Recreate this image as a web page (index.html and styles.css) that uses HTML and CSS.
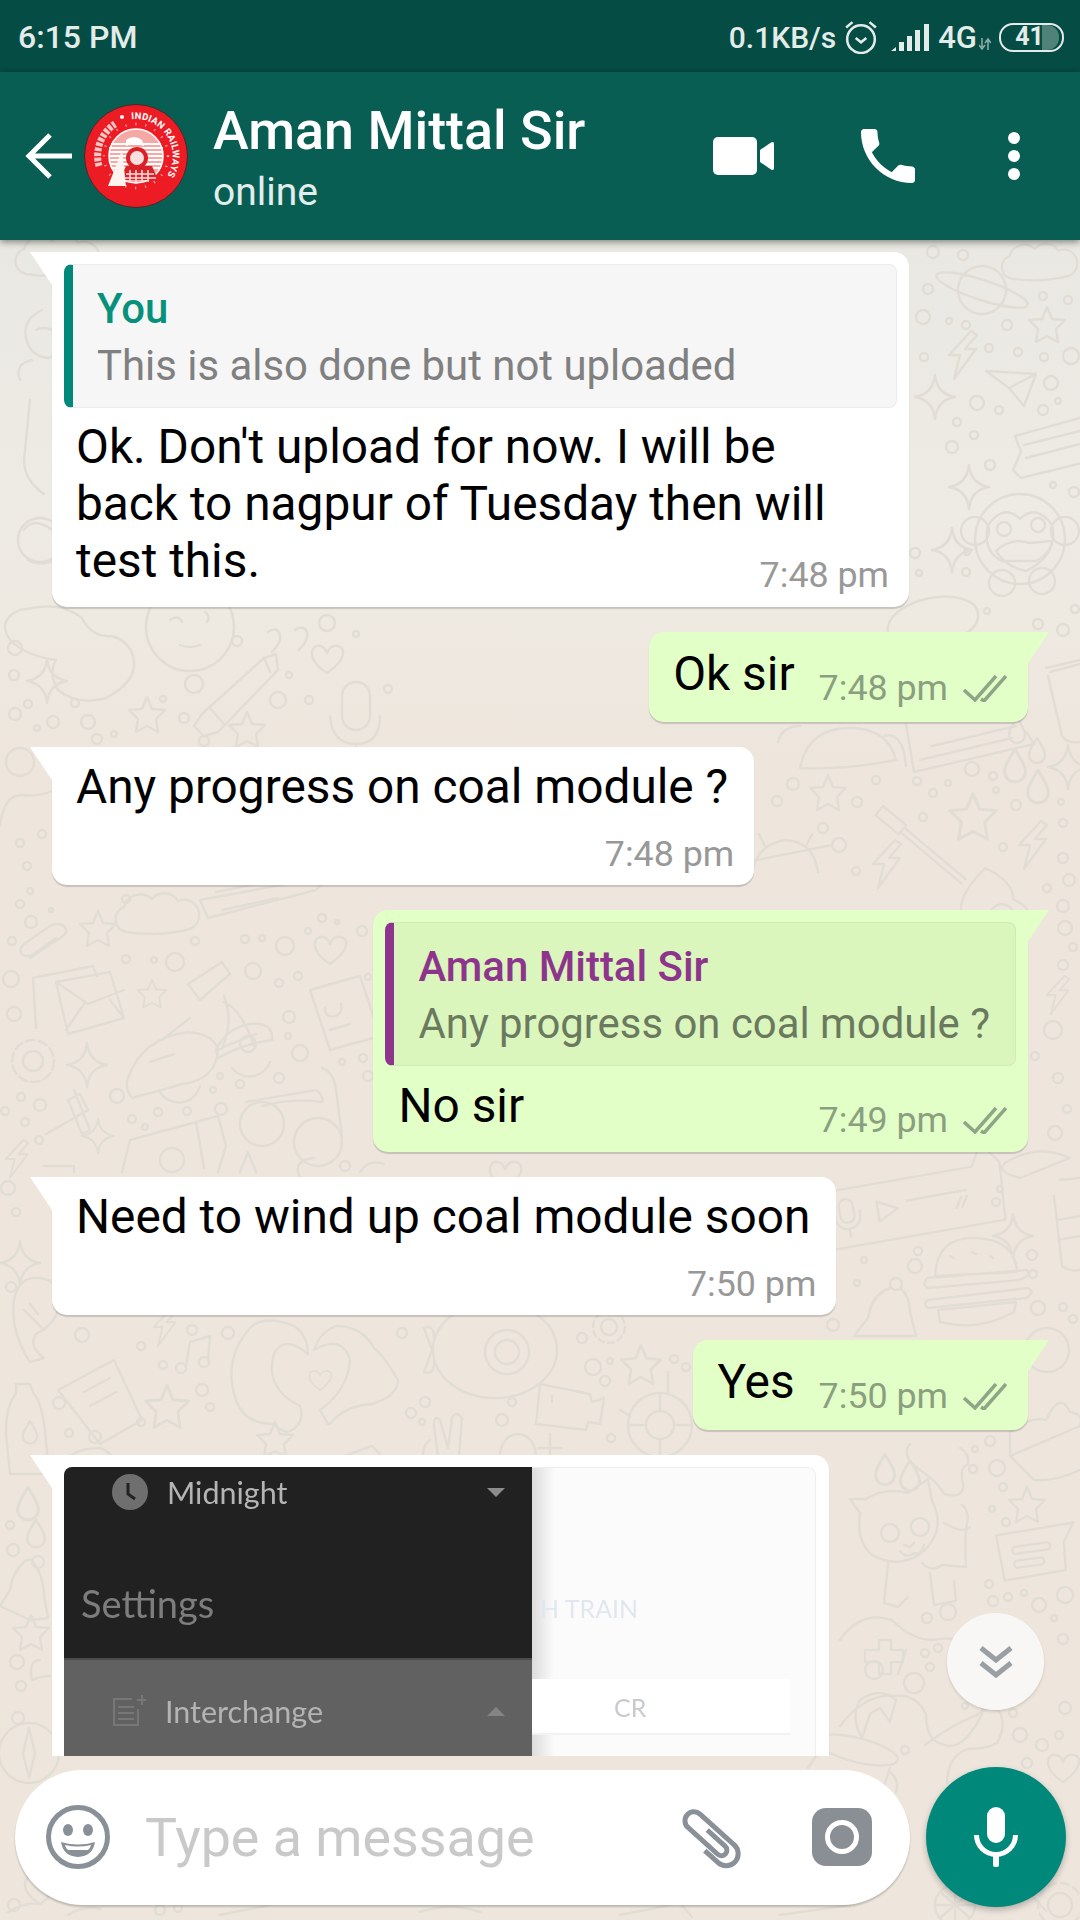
FILE: index.html
```html
<!DOCTYPE html>
<html lang="en">
<head>
    <meta charset="UTF-8">
    <meta name="viewport" content="width=device-width, initial-scale=1.0">
    <title>Aman Mittal Sir</title>
    <link rel="stylesheet" href="styles.css">
</head>
<body>
<div class="phone">
    <div class="status">
        <span>6:15 PM</span>
        <div class="status-right">
            <span class="speed">0.1KB/s</span>
            <svg class="alarm" viewBox="0 0 32 32"><circle cx="16" cy="18" r="13"/><path d="M11 17l5 4 5-4M2 7l6-5M30 7l-6-5"/></svg>
            <svg class="signal" viewBox="0 0 39 27"><path d="M0 27l5-4v4zM8 18h5v9H8zM16 12h5v15h-5zM24 6h5v21h-5zM33 0h5v27h-5z"/></svg>
            <span class="net">4G</span>
            <svg class="updown" viewBox="0 0 12 12"><path d="M3 0v9M0 7l3 4 3-4M9 12V3M6 5l3-4 3 4"/></svg>
            <div class="battery"><span class="battery-fill"></span><span class="battery-num">41</span></div>
        </div>
    </div>

    <header class="appbar">
        <svg class="back" viewBox="0 0 47 46"><path d="M47 23H5M25 2L4 23l21 21"/></svg>
        <svg class="avatar" viewBox="0 0 104 104">
            <defs>
                <path id="ringRight" d="M47.500 15.300A37 37 0 0 1 84 70"/>
            </defs>
            <circle cx="52" cy="52" r="51.500" fill="#ed1c24" stroke="#3a2d2c" stroke-width="1"/>
            <text class="avatar-text"><textPath href="#ringRight">INDIAN RAILWAYS</textPath></text>
            <path d="M15 62A38 38 0 0 1 31 20" fill="none" stroke="#f7c9c4" stroke-width="7" stroke-dasharray="3.500 1.500"/>
            <circle cx="38" cy="13" r="2" fill="#fff"/>
            <circle cx="52" cy="52" r="32" fill="none" stroke="#fbb" stroke-width="2.400" stroke-dasharray="1 9"/>
            <circle cx="52" cy="52" r="27" fill="#f6a9a4" stroke="#fff" stroke-width="1.500"/>
            <path d="M27 40h50M25 44h54M25 48h54M25 52h54M25 56h54M26 60h52M27 64h50" stroke="#fff" stroke-width="1.800"/>
            <path d="M42 62h26l6 14H36z" fill="#d92128"/>
            <path d="M42 70h28M40 74h32M46 66v12M52 66v12M58 66v12M64 66v12" stroke="#fbdedb" stroke-width="1.500"/>
            <circle cx="53" cy="54" r="11" fill="#d92128"/>
            <circle cx="53" cy="54" r="7" fill="#f9dfdd"/>
            <path d="M24 82l8-20 6-16 4 36z" fill="#fff3f0"/>
            <path d="M42 36q8-6 16 0l2 6q-10-4-18 0z" fill="#fff"/>
        </svg>
        <div class="who">
            <div class="who-name">Aman Mittal Sir</div>
            <div class="who-state">online</div>
        </div>
        <div class="actions">
            <svg class="act-video" viewBox="0 0 61 38"><rect width="44" height="38" rx="5"/><path d="M47 13l11-7.500q3-1.500 3 1.500v24q0 3-3 1.500L47 25z"/></svg>
            <svg class="act-call" viewBox="3 3 18 18"><path d="M6.620 10.790c1.440 2.830 3.760 5.140 6.590 6.590l2.200-2.200c.27-.27.67-.36 1.020-.24 1.120.37 2.330.57 3.570.57.55 0 1 .45 1 1V20c0 .55-.45 1-1 1-9.390 0-17-7.610-17-17 0-.55.45-1 1-1h3.500c.55 0 1 .45 1 1 0 1.250.2 2.450.57 3.570.11.35.03.74-.25 1.020l-2.200 2.200z"/></svg>
            <svg class="act-more" viewBox="0 0 12 48"><circle cx="6" cy="6" r="6"/><circle cx="6" cy="24" r="6"/><circle cx="6" cy="42" r="6"/></svg>
        </div>
    </header>

    <main class="chat">
        <!-- wallpaper doodles, page coordinates shifted by the header -->
        <svg class="wallpaper" viewBox="0 240 1080 1680">
            <defs>
                <path id="star" d="M0-18L5-6l13 1-9 9 2 13-11-6-11 6 2-13-9-9 13-1z"/>
                <path id="spark" d="M0-22Q2-3 20 0 2 3 0 22-2 3-20 0-2-3 0-22z"/>
                <path id="drop" d="M0-12C6-3 8 1 8 5A8 8 0 0 1-8 5C-8 1-6-3 0-12z"/>
                <path id="bolt" d="M8-24L-14 0H-3L-9 24 13-6H2L14-20z"/>
                <path id="heart" d="M0 14C-22 0-16-15-7-13-3-12-1-9 0-6 2-11 6-14 11-13 20-11 18 2 0 14z"/>
                <path id="cloud" d="M-34 14a13 13 0 0 1-2-25 17 17 0 0 1 28-8 16 16 0 0 1 26 2 15 15 0 0 1 12 28q-30 8-64 3z"/>
            </defs>
            <use href="#star" transform="translate(1047 325)"/><use href="#star" transform="translate(828 793)"/>
            <use href="#star" transform="translate(973 817) scale(1.3)"/>
            <use href="#star" transform="translate(147 715)"/><use href="#star" transform="translate(247 730)"/>
            <use href="#star" transform="translate(98 929)"/><use href="#star" transform="translate(152 994) scale(.8)"/>
            <use href="#star" transform="translate(167 1407) scale(1.2)"/><use href="#star" transform="translate(275 1440)"/>
            <use href="#star" transform="translate(641 1365) scale(1.1)"/><use href="#star" transform="translate(1027 1505)"/>
            <use href="#star" transform="translate(31 1633)"/>
            <use href="#spark" transform="translate(935 397)"/><use href="#spark" transform="translate(969 487)"/>
            <use href="#spark" transform="translate(952 550)"/><use href="#spark" transform="translate(1068 767)"/>
            <use href="#spark" transform="translate(47 681)"/><use href="#spark" transform="translate(87 1065)"/>
            <use href="#spark" transform="translate(98 1136) scale(.8)"/><use href="#spark" transform="translate(1013 1236)"/>
            <use href="#spark" transform="translate(20 1263)"/>
            <use href="#drop" transform="translate(1015 765) scale(1.3)"/><use href="#drop" transform="translate(1038 786) scale(1.3)"/>
            <use href="#drop" transform="translate(1037 750)"/><use href="#drop" transform="translate(1017 730)"/>
            <use href="#drop" transform="translate(885 1469) scale(1.2)"/><use href="#drop" transform="translate(910 1475) scale(1.2)"/>
            <use href="#drop" transform="translate(28 1503) scale(1.3)"/><use href="#drop" transform="translate(36 1533) scale(1.1)"/>
            <use href="#bolt" transform="translate(963 355)"/><use href="#bolt" transform="translate(1033 845)"/>
            <use href="#bolt" transform="translate(887 864)"/><use href="#bolt" transform="translate(1058 995) scale(.8)"/>
            <use href="#bolt" transform="translate(165 1327) scale(.8)"/><use href="#bolt" transform="translate(17 1159) scale(.8)"/>
            <use href="#heart" transform="translate(327 659)"/><use href="#heart" transform="translate(330 950)"/>
            <use href="#heart" transform="translate(320 1380) scale(.7)"/><use href="#heart" transform="translate(1063 1768)"/>
            <use href="#heart" transform="translate(505 1175)"/><use href="#heart" transform="translate(40 1890)"/>
            <use href="#cloud" transform="translate(1042 266) scale(.9)"/><use href="#cloud" transform="translate(160 918)"/>
            <use href="#cloud" transform="translate(60 260)"/>

            <!-- planet -->
            <g transform="translate(982 290) rotate(18)"><circle r="24"/><ellipse rx="48" ry="10"/></g>
            <!-- paper plane -->
            <path d="M986 371l50 3-12 32-15-18-23-17zM1009 388l27-14"/>
            <!-- ticket -->
            <path d="M1080 418l-65 18 6 16-8 18 8 8 65-16M1024 445l56-14M1026 458l54-14"/>
            <!-- monkey -->
            <g transform="translate(1020 539)">
                <circle r="45"/><circle cx="-45" cy="-8" r="14"/><circle cx="45" cy="-8" r="14"/>
                <path d="M-32-14q16-22 32-6 16-16 32 6 6 24-16 36H-18Q-38 12-32-14z"/>
                <circle cx="-16" cy="-10" r="7"/><circle cx="18" cy="-14" r="7"/>
                <path d="M-24 12q14-14 34-8l22-2q-2 18-26 30-20-4-30-20z"/>
                <circle cx="-18" cy="44" r="13"/><circle cx="22" cy="42" r="13"/>
            </g>
            <!-- donut and cup -->
            <ellipse cx="933" cy="622" rx="46" ry="24" transform="rotate(-12 933 622)"/>
            <path d="M1046 668l34-8M1048 676l14 60q6 8 18 6M1050 672l30-8"/>
            <!-- notebook -->
            <path d="M908 700l8 48 120-28-8-12M922 736l92-22M934 722l84-20" transform="translate(-2 24)"/>
            <!-- taco -->
            <path d="M800 768q8-40 50-40 38 0 46 32q-50 10-96 8zM778 742q4-16 22-16M884 736q14-4 20 16l2 14"/>
            <!-- guitar -->
            <g transform="translate(887 817) rotate(40)">
                <path d="M-10-6l30 0 0 12-30 0zM20-3H100M20 3H100M108-24q30-8 42 6 24-8 32 16 0 20-24 22-14 8-36 8-18-10-14-52z"/>
                <circle cx="152" cy="2" r="12"/>
            </g>
            <!-- android and folder -->
            <path d="M752 874q4-30 34-34 28 2 32 32M765 846l-6-12M806 846l6-12"/>
            <path d="M740 885l12-24 80-16"/>

            <!-- mic card and burger -->
            <g transform="translate(910 1208) rotate(-10)">
                <path d="M-92-30L68-30 80-52 96-30 92 28-92 28z"/>
                <rect x="-70" y="-20" width="14" height="24" rx="7"/><path d="M-76-6q1 16 13 16 13 0 13-16M-63 10v8"/>
                <path d="M-32-12l20 10-20 10zM-2-8h60M46 8l6-10M52 8l6-10"/>
            </g>
            <path d="M935 1276q2-40 42-38 38 2 40 34zM927 1278l100-8q4 6-8 10l-90 8q-8-2-2-10zM928 1300l100-12q8 4-2 10l-98 10q-6-4 0-8zM938 1310l78-8-2 10q-36 20-74 10z"/>
            <path d="M950 1256l4 2M972 1252l4 2M990 1256l3 2"/>
            <!-- bell -->
            <circle cx="896" cy="1284" r="6"/><path d="M890 1288q-18 6-22 30l-14 18 62 0-6-24q0-16-10-24"/>
            <!-- tall cup and wave -->
            <path d="M1060 1180l20-2M1054 1196l8 70q8 6 18 4M1058 1220l22-4M1058 1240l22-4M1010 1160q30-16 60-2l-50 20q-30-8-10-18z"/>
            <!-- wheel and cupcake -->
            <circle cx="1047" cy="1350" r="22"/><path d="M1010 1432q20-16 36-12 14-30 24-8 14 2 10 14l-70 30zM1010 1456l24 24q20 2 46-10"/>
            <!-- blob and popsicle -->
            <path d="M910 1444q-10 12 10 26 18 12 24 24 24 6 18-16-2-10 6-14 2-10-8-16"/>

            <!-- cat -->
            <g transform="translate(912 1543)">
                <path d="M-52-30l-10-14 16 0q18-12 42-6l20-14 4 22q14 26-6 48-24 22-54 6Q-56-2-52-30z"/>
                <path d="M32-20l8 4q12 6 18 0M10 20q10 10 20 2l24 2q-2-30 2-50-2-10-6-12M-24 20l-4 40 14 4 10-10M18 30l4 32 22-4-2-20"/>
                <circle cx="-22" cy="-10" r="9"/><circle cx="8" cy="-16" r="9"/><path d="M-12 8q6 8 14 2 8 2 10-8M-8 2l6 2 4-4"/>
            </g>
            <!-- note card -->
            <g transform="translate(1029 1553) rotate(-8)">
                <path d="M-30-22L48-24 36-6 34 22-28 24z"/>
                <rect x="-16" y="-8" width="38" height="7" rx="3"/><rect x="-16" y="6" width="30" height="7" rx="3"/>
            </g>
            <!-- gamepad -->
            <path d="M840 1640q20-30 52-20 20 20 40 20 36-6 50 14 4 30 0 60-20 40-40 30-16-4-16-30-10-20-30-18-30-4-56 30M865 1650h14v-10h12v10h12v12h-12v12h-12v-12h-14zM906 1650l-8 24"/>
            <!-- shell -->
            <path d="M860 1700q20-14 36 0l-6 22-10-14-10 6-8 24q-12-20-2-38z"/>
            <!-- mug near composer -->
            <ellipse cx="857" cy="1750" rx="42" ry="12" transform="rotate(14 857 1750)"/>
            <path d="M820 1750l-12 18M890 1768l-10 30"/>
            <!-- hand and wheel under the mic -->
            <path d="M925 1745q26-20 52-30 12-10 22-4 8 14-2 32-10 6-30 6-20 8-20 34"/>
            <circle cx="955" cy="1905" r="20"/><path d="M955 1885v40M935 1905h40M940 1892l30 26M970 1892l-30 26"/>
            <circle cx="1060" cy="1905" r="12"/><circle cx="1060" cy="1905" r="22" stroke-dasharray="8 5"/>

            <!-- top left -->
            <path d="M10 640q-14-20 10-30l12-2q30-6 50 10 10 20 30 18 20 6 22 26t-28 36q-28 8-48-8-10-16-2-30-30-4-46-20z"/>
            <circle cx="190" cy="627" r="44"/><path d="M170 620q8-6 12 2M205 612q6 4 2 10M180 645q10 4 20 0"/>
            <path d="M268 632q8-6 12 2 2 8-8 18M295 630q8-6 12 2 2 8-8 18"/>
            <path d="M42 310q-20 10-16 28t22 20q10-2 12-14M36 330q8-4 16 0"/>
            <path d="M20 380q-6-16 12-20M30 400l-6 60q0 20 20 34"/>
            <circle cx="40" cy="540" r="22"/><path d="M24 530q10-14 28 0M28 560q14 8 30-2"/>
            <!-- pencil -->
            <path d="M264 658l-62 56-8 12 10 10 14-4 60-62-2-16zM210 708l14 16M264 658l6 14"/>
            <!-- mic -->
            <rect x="342" y="682" width="28" height="48" rx="14"/><path d="M330 716q2 28 26 28 24 0 24-28M356 744v14"/>
            <!-- person -->
            <circle cx="20" cy="762" r="14"/><path d="M0 825q4-30 22-30 16 2 30-4"/>
            <!-- card row -->
            <path d="M200 900l130-24-14 14-108 28-8-18zM216 892l60-12M222 910l56-12"/>
            <!-- paperclip -->
            <path d="M30 958l30-20q10-6 4-12-6-4-14 0l-26 18q-6 6-2 10 4 4 12 0l22-16"/>
            <!-- envelope -->
            <path d="M36 1028L33 978l60-12 4 10M56 982l54-10 14 46-56 16zM56 982l32 22 36-14M66 1030l18-26M110 1000l14 18"/>
            <!-- scooter -->
            <g>
                <path d="M128 1078q14-40 60-46 26 2 30 18-2 30-36 34-26 8-50 14-8-10-4-20zM190 1018l-28 22M150 1062l24-8"/>
                <path d="M160 1092a22 22 0 0 0 40-6M218 1050l8-4 30-12M222 1048q12-26 2-52M188 984l34-22 8 12-30 26-12-16zM224 1002q18 8 30 44M216 1050q10-22 34-26 24-2 22 16-30 4-54 18zM232 1068a22 22 0 0 0 38-6"/>
                <circle cx="248" cy="1044" r="8"/>
            </g>
            <!-- gear -->
            <circle cx="33" cy="1061" r="10"/><circle cx="33" cy="1061" r="21" stroke-dasharray="9 4"/>
            <!-- passport -->
            <path d="M310 990l50-14 20 60-50 14zM310 990l42-12M325 1008q0 10 10 8 8-2 6-12M330 1030l20-6"/>
            <!-- glasses -->
            <circle cx="262" cy="1124" r="22"/><circle cx="318" cy="1142" r="24"/><path d="M246 1102l70-12q8 6 6 12-30-4-60 4M322 1068q12 4 14 22l6 46"/>
            <!-- bluetooth-like bow -->
            <path d="M46 1134l42-24-8-16-12 6 14 34 8-4-16-40"/>
            <!-- lipstick and bottom bits -->
            <path d="M122 1172l8-32 88-24 8 30-8 26M196 1122l8 46"/><circle cx="172" cy="1160" r="12"/>
            <path d="M240 1172l8-20 8 20"/>
            <path d="M44 1166h30v6M360 1172q10-14 24-8M300 1178q-8-18 14-20"/>

            <!-- middle band -->
            <path d="M14 1300q4-24 26-22 20 2 20 26-4 20-24 30-8 12 8 24l-14 4q-20-30-16-62zM24 1310l20 20M30 1304l8 10"/>
            <path d="M58 1390l56-30 28 60-42 24-42-54zM84 1392l26-14M90 1406l26-14"/>
            <path d="M186 1366l4-24 20-6-2 24"/><circle cx="181" cy="1368" r="5"/><circle cx="204" cy="1362" r="5"/>
            <!-- heart hands -->
            <path d="M236 1400q-14-40 14-72 14-14 44-2 14 10 14 28-24-20-34 0-10 34 26 52 6 18-12 26-10-2-14-8-30 0-38-24zM330 1424q14-18 42-20 26-8 26-24-14-24-24-32-12-22-38-22-16 6-22 24 28-16 36 10-2 30-30 50l8 14z"/>
            <!-- balloon eye -->
            <ellipse cx="495" cy="1350" rx="62" ry="48"/><circle cx="507" cy="1352" r="22"/><circle cx="507" cy="1352" r="12"/>
            <path d="M432 1350l-8-22q10-4 10 10M432 1350l-8 22q10 4 10-10"/>
            <!-- peace hand -->
            <path d="M440 1472l-6-46q0-12 6-6l8 28 4-30q4-8 10 0l-4 50M430 1440q-10 6-6 30"/>
            <ellipse cx="518" cy="1456" rx="18" ry="22"/><path d="M550 1434v30M538 1448h24"/>
            <!-- wallet -->
            <path d="M300 1472l72-26 26 26M330 1458l-10 14"/>
            <!-- video card -->
            <path d="M540 1384l50 10 2 8 12-4-4 26-12-2-2 8-50-6zM552 1396v6"/>
            <!-- gear small -->
            <circle cx="609" cy="1327" r="8"/><circle cx="609" cy="1327" r="16" stroke-dasharray="6 4"/>
            <!-- turtle -->
            <circle cx="660" cy="1425" r="32"/><circle cx="660" cy="1425" r="14"/><path d="M660 1393v18M660 1440v16M630 1425h16M674 1425h16M620 1410l10 6M668 1372v20"/>
            <!-- bottle -->
            <path d="M16 1384h14l4 10q10 12 12 50l4 30H10l-4-40q0-30 10-40z"/><use href="#drop" transform="translate(30 1432) scale(.9)"/>
            <path d="M60 1472q6-24 40-24 14 4 18 24M160 1465l40-8 14 16"/>
            <!-- bell and compass left -->
            <path d="M26 1560q-14 12-16 30L0 1606l30 14 18-2-4-22q0-20-12-36z"/><circle cx="38" cy="1562" r="6"/>
            <circle cx="29" cy="1753" r="30"/><path d="M29 1728l6 25-6 25-6-25z"/><path d="M40 1660q-12 0-8 20 8-4 18-4"/><circle cx="18" cy="1718" r="6"/>

            <!-- below the composer -->
            <path d="M8 1912q16-10 32-8M68 1915q16-10 32-6M220 1915l50-10M420 1912q30-10 60 0M620 1915l60-12 12 14M780 1915l70-10"/>
            <path d="M1022 1885l24 26M1040 1860q10-6 16 4l-8 12M890 1772q10 8 6 20"/>

            <!-- small rings, right strip -->
            <g>
                <circle cx="923" cy="317" r="7"/><circle cx="928" cy="289" r="5"/><circle cx="933" cy="252" r="6"/><circle cx="963" cy="255" r="5"/><circle cx="949" cy="321" r="3"/><circle cx="966" cy="325" r="4"/><circle cx="1007" cy="325" r="5"/><circle cx="989" cy="348" r="4"/><circle cx="1018" cy="352" r="4"/><circle cx="1044" cy="357" r="4"/><circle cx="1071" cy="356" r="8"/><circle cx="924" cy="357" r="4"/><circle cx="1043" cy="296" r="4"/><circle cx="1068" cy="300" r="4"/><circle cx="1051" cy="383" r="7"/><circle cx="1058" cy="401" r="3"/><circle cx="977" cy="403" r="7"/><circle cx="999" cy="410" r="4"/><circle cx="1043" cy="410" r="5"/><circle cx="957" cy="422" r="4"/><circle cx="974" cy="435" r="4"/><circle cx="952" cy="447" r="6"/><circle cx="990" cy="465" r="5"/><circle cx="1053" cy="485" r="3"/><circle cx="1074" cy="492" r="5"/><circle cx="915" cy="553" r="5"/><circle cx="919" cy="573" r="3"/><circle cx="967" cy="552" r="3"/><circle cx="966" cy="572" r="4"/><circle cx="987" cy="611" r="3"/><circle cx="1038" cy="624" r="5"/><circle cx="1063" cy="630" r="6"/><circle cx="1075" cy="609" r="4"/>
                <circle cx="917" cy="781" r="4"/><circle cx="933" cy="793" r="4"/><circle cx="948" cy="783" r="3"/><circle cx="972" cy="769" r="7"/><circle cx="993" cy="776" r="4"/><circle cx="996" cy="790" r="3"/><circle cx="1016" cy="805" r="5"/><circle cx="1061" cy="802" r="3"/><circle cx="1063" cy="823" r="4"/><circle cx="1069" cy="880" r="6"/><circle cx="923" cy="817" r="4"/><circle cx="839" cy="845" r="7"/><circle cx="857" cy="802" r="5"/><circle cx="856" cy="871" r="4"/><circle cx="1003" cy="847" r="4"/><circle cx="1047" cy="888" r="4"/><circle cx="1063" cy="858" r="5"/><circle cx="1063" cy="906" r="6"/><circle cx="793" cy="784" r="6"/><circle cx="777" cy="801" r="5"/><circle cx="876" cy="780" r="4"/><circle cx="823" cy="828" r="5"/>
                <circle cx="1053" cy="1030" r="9"/><circle cx="1063" cy="965" r="5"/><circle cx="1065" cy="928" r="7"/><circle cx="1073" cy="947" r="4"/><circle cx="1035" cy="1056" r="4"/><circle cx="1058" cy="1078" r="5"/><circle cx="1067" cy="1109" r="4"/><circle cx="1055" cy="1133" r="7"/><circle cx="1000" cy="1189" r="3"/><circle cx="996" cy="1202" r="4"/><circle cx="857" cy="1283" r="3"/><circle cx="864" cy="1260" r="3"/><circle cx="915" cy="1266" r="7"/><circle cx="918" cy="1251" r="4"/><circle cx="1032" cy="1255" r="5"/><circle cx="1033" cy="1274" r="4"/><circle cx="1038" cy="1308" r="7"/><circle cx="1063" cy="1307" r="4"/><circle cx="1073" cy="1319" r="4"/><circle cx="833" cy="1325" r="6"/><circle cx="990" cy="1441" r="5"/><circle cx="975" cy="1449" r="3"/><circle cx="973" cy="1469" r="4"/><circle cx="997" cy="1468" r="8"/><circle cx="1003" cy="1487" r="4"/><circle cx="992" cy="1509" r="3"/><circle cx="1006" cy="1522" r="4"/>
                <circle cx="989" cy="1584" r="4"/><circle cx="993" cy="1601" r="5"/><circle cx="1008" cy="1597" r="4"/><circle cx="1024" cy="1593" r="3"/><circle cx="1039" cy="1605" r="7"/><circle cx="1065" cy="1595" r="8"/><circle cx="1054" cy="1618" r="3"/><circle cx="1063" cy="1639" r="5"/><circle cx="1065" cy="1708" r="6"/><circle cx="1020" cy="1735" r="7"/><circle cx="1042" cy="1745" r="6"/><circle cx="1059" cy="1735" r="4"/><circle cx="1027" cy="1763" r="5"/><circle cx="1013" cy="1713" r="4"/><circle cx="965" cy="1706" r="3"/><circle cx="948" cy="1612" r="8"/><circle cx="927" cy="1618" r="5"/><circle cx="874" cy="1670" r="9"/><circle cx="914" cy="1683" r="10"/><circle cx="925" cy="1653" r="4"/><circle cx="938" cy="1648" r="4"/><circle cx="930" cy="1667" r="4"/><circle cx="905" cy="1750" r="4"/>
            </g>
            <!-- small rings, left side -->
            <g>
                <circle cx="15" cy="648" r="7"/><circle cx="14" cy="675" r="5"/><circle cx="15" cy="714" r="6"/><circle cx="28" cy="704" r="4"/><circle cx="37" cy="728" r="3"/><circle cx="53" cy="722" r="6"/><circle cx="75" cy="703" r="4"/><circle cx="88" cy="722" r="7"/><circle cx="97" cy="739" r="5"/><circle cx="114" cy="734" r="3"/><circle cx="194" cy="684" r="9"/><circle cx="163" cy="699" r="3"/><circle cx="184" cy="718" r="5"/><circle cx="204" cy="741" r="5"/><circle cx="278" cy="700" r="8"/><circle cx="289" cy="675" r="3"/><circle cx="309" cy="700" r="4"/><circle cx="327" cy="623" r="8"/><circle cx="237" cy="641" r="5"/><circle cx="356" cy="634" r="3"/><circle cx="388" cy="689" r="4"/>
                <circle cx="20" cy="843" r="4"/><circle cx="42" cy="834" r="4"/><circle cx="27" cy="866" r="4"/><circle cx="30" cy="891" r="3"/><circle cx="20" cy="904" r="4"/><circle cx="31" cy="922" r="6"/><circle cx="51" cy="910" r="2"/><circle cx="12" cy="941" r="4"/>
                <circle cx="126" cy="899" r="4"/><circle cx="195" cy="941" r="4"/><circle cx="126" cy="959" r="4"/><circle cx="154" cy="960" r="3"/><circle cx="175" cy="962" r="9"/><circle cx="245" cy="939" r="4"/><circle cx="262" cy="938" r="3"/><circle cx="285" cy="946" r="9"/><circle cx="322" cy="918" r="4"/><circle cx="337" cy="922" r="2"/><circle cx="362" cy="931" r="5"/><circle cx="308" cy="931" r="3"/><circle cx="253" cy="971" r="8"/><circle cx="279" cy="983" r="4"/><circle cx="298" cy="976" r="4"/><circle cx="11" cy="979" r="8"/><circle cx="368" cy="977" r="3"/><circle cx="14" cy="1014" r="7"/><circle cx="289" cy="1017" r="6"/><circle cx="288" cy="1036" r="3"/><circle cx="300" cy="1053" r="8"/><circle cx="363" cy="1058" r="4"/><circle cx="342" cy="1062" r="3"/><circle cx="368" cy="1076" r="5"/><circle cx="279" cy="1078" r="5"/><circle cx="220" cy="1076" r="3"/><circle cx="240" cy="1084" r="4"/><circle cx="213" cy="1090" r="3"/><circle cx="117" cy="1096" r="7"/><circle cx="21" cy="1097" r="4"/><circle cx="40" cy="1105" r="6"/><circle cx="5" cy="1111" r="4"/><circle cx="25" cy="1122" r="4"/><circle cx="39" cy="1140" r="4"/><circle cx="132" cy="1119" r="4"/><circle cx="145" cy="1127" r="3"/><circle cx="158" cy="1112" r="4"/><circle cx="187" cy="1111" r="4"/><circle cx="221" cy="1109" r="6"/><circle cx="345" cy="1166" r="5"/><circle cx="8" cy="1188" r="7"/><circle cx="16" cy="1212" r="4"/><circle cx="11" cy="1287" r="5"/>
                <circle cx="82" cy="1335" r="7"/><circle cx="141" cy="1346" r="4"/><circle cx="163" cy="1365" r="4"/><circle cx="192" cy="1330" r="5"/><circle cx="228" cy="1333" r="6"/><circle cx="59" cy="1403" r="6"/><circle cx="202" cy="1390" r="6"/><circle cx="210" cy="1407" r="4"/><circle cx="141" cy="1422" r="4"/><circle cx="69" cy="1433" r="4"/><circle cx="95" cy="1437" r="6"/><circle cx="402" cy="1333" r="5"/><circle cx="582" cy="1338" r="5"/><circle cx="593" cy="1367" r="8"/><circle cx="610" cy="1361" r="3"/><circle cx="605" cy="1381" r="5"/><circle cx="411" cy="1413" r="5"/><circle cx="425" cy="1402" r="5"/><circle cx="422" cy="1422" r="3"/><circle cx="512" cy="1402" r="4"/><circle cx="502" cy="1420" r="6"/><circle cx="611" cy="1438" r="4"/><circle cx="674" cy="1359" r="4"/><circle cx="686" cy="1367" r="4"/>
                <circle cx="10" cy="1525" r="4"/><circle cx="13" cy="1550" r="6"/><circle cx="17" cy="1662" r="7"/><circle cx="21" cy="1686" r="5"/><circle cx="14" cy="1905" r="6"/><circle cx="160" cy="1910" r="5"/><circle cx="178" cy="1908" r="4"/>
            </g>
        </svg>

        <div class="messages">
            <article class="msg in msg-wide">
                <div class="quote quote-in">
                    <div class="quote-name">You</div>
                    <div class="quote-text">This is also done but not uploaded</div>
                </div>
                <div class="body">
                    <p class="text">Ok. Don't upload for now. I will be<br>back to nagpur of Tuesday then will</p>
                    <div class="row">
                        <p class="text text-row">test this.</p>
                        <div class="meta meta-in"><span>7:48 pm</span></div>
                    </div>
                </div>
            </article>

            <article class="msg out msg-short">
                <div class="row">
                    <p class="text text-row">Ok sir</p>
                    <div class="meta"><span>7:48 pm</span><svg class="ticks" viewBox="0 0 44 27"><path d="M1 15l11 10L33 1M18 24l3 2L43 1"/></svg></div>
                </div>
            </article>

            <article class="msg in">
                <div class="body">
                    <p class="text">Any progress on coal module ?</p>
                    <div class="meta meta-below"><span>7:48 pm</span></div>
                </div>
            </article>

            <article class="msg out">
                <div class="quote quote-out">
                    <div class="quote-name">Aman Mittal Sir</div>
                    <div class="quote-text">Any progress on coal module ?</div>
                </div>
                <div class="row row-reply">
                    <p class="text text-row">No sir</p>
                    <div class="meta"><span>7:49 pm</span><svg class="ticks" viewBox="0 0 44 27"><path d="M1 15l11 10L33 1M18 24l3 2L43 1"/></svg></div>
                </div>
            </article>

            <article class="msg in">
                <div class="body">
                    <p class="text">Need to wind up coal module soon</p>
                    <div class="meta meta-below"><span>7:50 pm</span></div>
                </div>
            </article>

            <article class="msg out msg-short">
                <div class="row">
                    <p class="text text-row">Yes</p>
                    <div class="meta"><span>7:50 pm</span><svg class="ticks" viewBox="0 0 44 27"><path d="M1 15l11 10L33 1M18 24l3 2L43 1"/></svg></div>
                </div>
            </article>

            <article class="msg in msg-shot">
                <div class="shot">
                    <div class="shot-side">
                        <div class="side-dark">
                            <div class="side-item">
                                <svg class="side-clock" viewBox="0 0 36 36"><circle cx="18" cy="18" r="18" fill="#6f6f6f"/><path d="M16 9v11l7 5" fill="none" stroke="#222" stroke-width="3"/></svg>
                                <span>Midnight</span>
                                <i class="caret"></i>
                            </div>
                            <div class="side-title">Settings</div>
                        </div>
                        <div class="side-gray">
                            <div class="side-item">
                                <svg class="side-doc" viewBox="0 0 34 32"><path d="M20 4H2v26h24V14M6 12h16M6 18h16M6 24h16M30 0v10M25 5h9" fill="none" stroke="#777" stroke-width="2"/></svg>
                                <span>Interchange</span>
                                <i class="caret caret-up"></i>
                            </div>
                        </div>
                    </div>
                    <div class="shot-main">
                        <div class="shot-head">H TRAIN</div>
                        <div class="shot-table">CR</div>
                    </div>
                </div>
            </article>
        </div>

        <button class="scroll-down">
            <svg viewBox="0 0 34 32"><path d="M2 2l15 12L32 2M2 17l15 12 15-12"/></svg>
        </button>

        <div class="composer">
            <div class="input">
                <svg class="emoji" viewBox="0 0 64 64">
                    <circle cx="32" cy="32" r="29.500" fill="none" stroke="#8a9098" stroke-width="5"/>
                    <ellipse cx="22" cy="25" rx="5" ry="6" fill="#8a9098"/><ellipse cx="42" cy="25" rx="5" ry="6" fill="#8a9098"/>
                    <path d="M15 37q17 5 34 0-2 14-17 15-15-1-17-15z" fill="#8a9098"/><path d="M19 40q13 3 26 0-1 4-3 5H22q-2-1-3-5z" fill="#fff"/>
                </svg>
                <span class="placeholder">Type a message</span>
                <svg class="clip" viewBox="0 0 61 56"><path transform="translate(30 28) rotate(42)" d="M-6-4H18A5.500 5.500 0 0 1 18 7H-22A9 9 0 0 1-22-11H24A12 12 0 0 1 24 13H6"/></svg>
                <svg class="camera" viewBox="0 0 60 58"><rect width="60" height="58" rx="14" fill="#8a8f96"/><circle cx="30" cy="29" r="14.500" fill="none" stroke="#fff" stroke-width="5"/></svg>
            </div>
            <div class="mic">
                <svg viewBox="0 0 44 60"><rect x="13" width="18" height="36" rx="9" fill="#fff"/><path d="M2.500 28a19.500 19.500 0 0 0 39 0" fill="none" stroke="#fff" stroke-width="5"/><rect x="19" y="46" width="6" height="14" rx="2" fill="#fff"/></svg>
            </div>
        </div>
    </main>
</div>
</body>
</html>
```

FILE: styles.css
```css
* {
    box-sizing: border-box;
}

body {
    margin: 0;
    font-family: Roboto, "Liberation Sans", sans-serif;
    background-color: #efe7de;
}

.phone {
    width: 1080px;
    height: 1920px;
    display: flex;
    flex-direction: column;
    overflow: hidden;
}

/* status bar */
.status {
    height: 72px;
    flex-shrink: 0;
    padding: 2px 16px 0 18px;
    display: flex;
    align-items: center;
    justify-content: space-between;
    background-color: #054c44;
    color: #e4ecea;
    font-size: 32px;
    font-weight: 500;
}

.status-right {
    display: flex;
    align-items: center;
}

.speed {
    font-size: 30px;
}

.alarm {
    width: 34px;
    height: 34px;
    margin-left: 8px;
    fill: none;
    stroke: #e4ecea;
    stroke-width: 2.400;
}

.signal {
    width: 39px;
    height: 27px;
    margin-left: 13px;
    fill: #e4ecea;
}

.net {
    margin-left: 8px;
    font-size: 31px;
}

.updown {
    width: 12px;
    height: 12px;
    margin: 14px 0 0 2px;
    fill: none;
    stroke: #8fb0aa;
    stroke-width: 1.500;
}

.battery {
    position: relative;
    width: 65px;
    height: 29px;
    margin-left: 8px;
    border: 2.500px solid #e4ecea;
    border-radius: 14px;
    overflow: hidden;
    text-align: center;
}

.battery-fill {
    position: absolute;
    top: 0;
    bottom: 0;
    left: 41px;
    right: 3px;
    border-radius: 0 12px 12px 0;
    background-color: #4f8279;
}

.battery-num {
    position: relative;
    display: block;
    margin-left: -4px;
    font-size: 25px;
    line-height: 24px;
    font-weight: 700;
}

/* app bar */
.appbar {
    position: relative;
    z-index: 2;
    height: 168px;
    flex-shrink: 0;
    display: flex;
    align-items: center;
    background-color: #095e54;
    color: #fff;
    box-shadow: 0 2px 7px rgba(0, 0, 0, 0.45);
}

.back {
    width: 47px;
    height: 46px;
    margin-left: 25px;
    fill: none;
    stroke: #fff;
    stroke-width: 5;
}

.avatar {
    width: 104px;
    height: 104px;
    margin-left: 12px;
}

.avatar-text {
    font-size: 9.500px;
    font-weight: 700;
    letter-spacing: 0.2px;
    fill: #fff;
}

.who {
    margin-left: 25px;
    padding-top: 4px;
}

.who-name {
    font-size: 53.800px;
    line-height: 60px;
    font-weight: 500;
}

.who-state {
    margin-top: 8px;
    font-size: 39px;
    line-height: 46px;
    color: #e2eeeb;
}

.actions {
    margin-left: auto;
    padding-right: 60px;
    display: flex;
    align-items: center;
    fill: #fff;
}

.act-video {
    width: 61px;
    height: 38px;
}

.act-call {
    width: 54px;
    height: 54px;
    margin-left: 87px;
}

.act-more {
    width: 12px;
    height: 48px;
    margin-left: 93px;
}

/* chat */
.chat {
    position: relative;
    flex: 1;
    min-height: 0;
    display: flex;
    flex-direction: column;
    background: linear-gradient(#e9e8e2 0, #eeebe4 280px, #eee6dd 520px);
}

.wallpaper {
    position: absolute;
    top: 0;
    left: 0;
    width: 1080px;
    height: 1680px;
    fill: none;
    stroke: #e1ddd5;
    stroke-width: 2.400;
    stroke-linecap: round;
    stroke-linejoin: round;
}

.messages {
    position: relative;
    flex: 1;
    min-height: 0;
    padding-top: 12px;
    display: flex;
    flex-direction: column;
    gap: 25px;
    overflow: hidden;
}

.msg {
    position: relative;
    flex-shrink: 0;
    padding: 12px 12px 11px;
    border-radius: 15px;
    box-shadow: 0 2px 1px rgba(0, 0, 0, 0.16);
}

.msg::before {
    content: "";
    position: absolute;
    top: 0;
    width: 22px;
    height: 33px;
}

.in {
    align-self: flex-start;
    margin-left: 52px;
    background-color: #fff;
    border-top-left-radius: 0;
}

.in::before {
    left: -22px;
    background-color: #fff;
    clip-path: polygon(0 0, 100% 0, 100% 100%);
}

.out {
    align-self: flex-end;
    margin-right: 52px;
    background-color: #e2ffc7;
    border-top-right-radius: 0;
}

.out::before {
    right: -21px;
    background-color: #e2ffc7;
    clip-path: polygon(0 0, 100% 0, 0 100%);
}

.msg-wide {
    width: 857px;
    padding-bottom: 12px;
}

.msg-short {
    padding: 14px 21px 14px 24px;
}

.text {
    margin: 0;
    font-size: 47.800px;
    line-height: 57px;
    color: #000;
}

.body {
    padding: 0 14px 0 12px;
}

.quote + .body {
    margin-top: 11px;
}

.row {
    display: flex;
    align-items: flex-end;
    justify-content: space-between;
}

.row-reply {
    margin: 12px 0 1px;
    padding: 0 9px 0 13px;
}

.text-row {
    margin-bottom: 5px;
}

.meta {
    flex-shrink: 0;
    display: flex;
    align-items: center;
    justify-content: flex-end;
    height: 40px;
    font-size: 35.800px;
    line-height: 40px;
    color: #989898;
}

.meta-in {
    margin-right: -6px;
}

.meta-below {
    margin: 18px -6px 0 0;
}

.out .meta {
    margin-left: 24px;
    color: #8b9f80;
}

.ticks {
    width: 44px;
    height: 27px;
    margin-left: 15px;
    fill: none;
    stroke: #8fa585;
    stroke-width: 3.500;
}

/* quoted reply */
.quote {
    padding: 20px 25px 17px 24px;
    border: 1px solid #ececec;
    border-left: 9px solid #00897b;
    border-radius: 8px;
    background-color: #f6f6f6;
}

.quote-out {
    border-color: #d2e8b6;
    border-left-color: #8d358c;
    background-color: #dbf6bd;
}

.quote-name {
    font-size: 41.900px;
    line-height: 48px;
    font-weight: 500;
    color: #07917d;
}

.quote-out .quote-name {
    color: #8d358c;
}

.quote-text {
    margin-top: 9px;
    font-size: 41.900px;
    line-height: 48px;
    white-space: nowrap;
    color: #808080;
}

.quote-out .quote-text {
    color: #6b7a5f;
}

/* photo message, cut off by the composer */
.msg-shot {
    width: 777px;
    padding: 12px 13px 12px 12px;
}

.shot {
    display: flex;
    height: 420px;
    border-radius: 8px;
    overflow: hidden;
    font-family: Lato, Roboto, sans-serif;
}

.shot-side {
    width: 468px;
    flex-shrink: 0;
}

.side-dark {
    height: 191px;
    background-color: #212121;
}

.side-gray {
    height: 229px;
    padding-top: 31px;
    border-top: 2px solid #4b4b4b;
    background-color: #616161;
}

.side-item {
    height: 40px;
    padding: 0 27px 0 48px;
    display: flex;
    align-items: center;
    font-size: 30.500px;
    color: #b4b4b4;
    filter: blur(0.5px);
}

.side-dark .side-item {
    height: 50px;
}

.side-clock {
    width: 36px;
    height: 36px;
    margin-right: 19px;
}

.side-doc {
    width: 34px;
    height: 32px;
    margin-right: 19px;
}

.caret {
    margin-left: auto;
    border-left: 9px solid transparent;
    border-right: 9px solid transparent;
    border-top: 9px solid #8c8c8c;
}

.caret-up {
    border-top: 0;
    border-bottom: 9px solid #848484;
}

.side-title {
    margin-top: 64px;
    padding-left: 17px;
    font-size: 38px;
    line-height: 44px;
    color: #7d7d7d;
    filter: blur(0.5px);
}

.shot-main {
    flex: 1;
    border: 1px solid #eee;
    border-left: 0;
    border-radius: 0 8px 8px 0;
    background: linear-gradient(90deg, #dcdcdc, #fbfbfb 22px);
}

.shot-head {
    margin: 125px 0 0 8px;
    font-size: 25px;
    line-height: 30px;
    color: #e1e7ee;
    filter: blur(0.5px);
}

.shot-table {
    margin: 56px 25px 0 0;
    height: 56px;
    padding-left: 82px;
    font-size: 25px;
    line-height: 56px;
    color: #c8cbce;
    background-color: #fff;
    border-bottom: 2px solid #f2f2f2;
    filter: blur(0.5px);
}

.scroll-down {
    position: absolute;
    top: 1373px;
    left: 947px;
    width: 97px;
    height: 97px;
    padding: 0;
    border: 0;
    border-radius: 50%;
    display: flex;
    align-items: center;
    justify-content: center;
    background-color: rgba(248, 248, 246, 0.96);
    box-shadow: 0 2px 3px rgba(0, 0, 0, 0.12);
}

.scroll-down svg {
    width: 34px;
    height: 32px;
    fill: none;
    stroke: #9a9fa3;
    stroke-width: 5;
}

/* composer */
.composer {
    position: relative;
    flex-shrink: 0;
    padding: 11px 14px 13px 15px;
    display: flex;
    align-items: center;
    justify-content: space-between;
}

.input {
    width: 895px;
    height: 135px;
    padding: 0 38px 0 31px;
    display: flex;
    align-items: center;
    border-radius: 68px;
    background-color: #fff;
    box-shadow: 0 2px 2px rgba(0, 0, 0, 0.2);
}

.emoji {
    width: 64px;
    height: 64px;
    flex-shrink: 0;
}

.placeholder {
    margin-left: 35px;
    font-size: 53.800px;
    color: #c9c9c9;
}

.clip {
    width: 61px;
    height: 56px;
    margin-left: auto;
    fill: none;
    stroke: #8a9098;
    stroke-width: 5;
    overflow: visible;
}

.camera {
    width: 60px;
    height: 58px;
    margin-left: 72px;
}

.mic {
    width: 140px;
    height: 140px;
    border-radius: 50%;
    display: flex;
    align-items: center;
    justify-content: center;
    background-color: #00897b;
    box-shadow: 0 3px 6px rgba(0, 0, 0, 0.25);
}

.mic svg {
    width: 44px;
    height: 60px;
}
```
